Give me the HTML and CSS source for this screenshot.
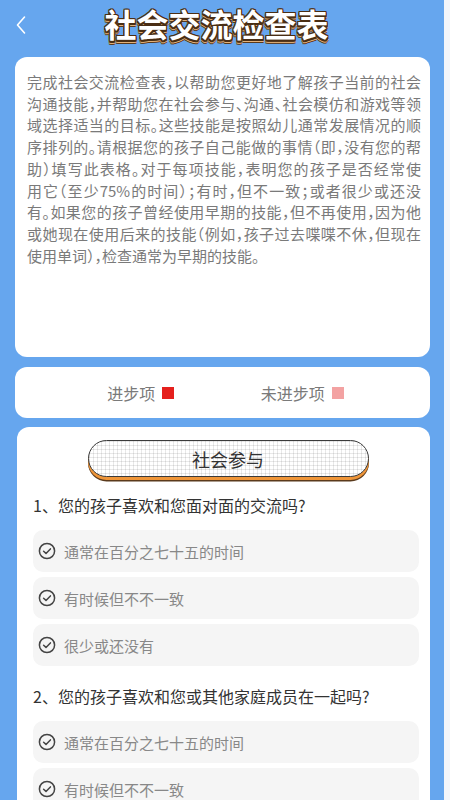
FILE: index.html
```html
<!DOCTYPE html>
<html lang="zh">
<head>
<meta charset="utf-8">
<title>社会交流检查表</title>
<link rel="stylesheet" href="styles.css">
</head>
<body>
<div class="page">
  <header class="topbar">
    <span class="back">
      <svg width="12" height="20" viewBox="0 0 12 20"><path d="M9.5 2 L2.5 10 L9.5 18" fill="none" stroke="#fff" stroke-width="1.6" stroke-linecap="round" stroke-linejoin="round"/></svg>
    </span>
    <h1 class="title">社会交流检查表</h1>
    <span></span>
  </header>

  <section class="card intro">
    <p><span class="ln">完成社会交流检查表，以帮助您更好地了解孩子当前的社会</span><span class="ln">沟通技能，并帮助您在社会参与、沟通、社会模仿和游戏等领</span><span class="ln">域选择适当的目标。这些技能是按照幼儿通常发展情况的顺</span><span class="ln">序排列的。请根据您的孩子自己能做的事情（即，没有您的帮</span><span class="ln">助）填写此表格。对于每项技能，表明您的孩子是否经常使</span><span class="ln">用它（至少75%的时间）；有时，但不一致；或者很少或还没</span><span class="ln">有。如果您的孩子曾经使用早期的技能，但不再使用，因为他</span><span class="ln">或她现在使用后来的技能（例如，孩子过去喋喋不休，但现在</span><span class="ln last">使用单词），检查通常为早期的技能。</span></p>
  </section>

  <section class="card legend">
    <span class="legend-item">进步项<i class="sq sq-red"></i></span>
    <span class="legend-item">未进步项<i class="sq sq-pink"></i></span>
  </section>

  <section class="card form">
    <div class="pill-wrap"><div class="pill">社会参与</div></div>

    <div class="question">1、您的孩子喜欢和您面对面的交流吗?</div>
    <div class="options">
      <div class="option"><svg class="chk" viewBox="0 0 18 18"><circle cx="9" cy="9" r="7.6" fill="none" stroke="#444" stroke-width="1.5"/><path d="M5.6 9.2 L8 11.4 L12.4 6.9" fill="none" stroke="#444" stroke-width="1.5" stroke-linecap="round" stroke-linejoin="round"/></svg><span>通常在百分之七十五的时间</span></div>
      <div class="option"><svg class="chk" viewBox="0 0 18 18"><circle cx="9" cy="9" r="7.6" fill="none" stroke="#444" stroke-width="1.5"/><path d="M5.6 9.2 L8 11.4 L12.4 6.9" fill="none" stroke="#444" stroke-width="1.5" stroke-linecap="round" stroke-linejoin="round"/></svg><span>有时候但不不一致</span></div>
      <div class="option"><svg class="chk" viewBox="0 0 18 18"><circle cx="9" cy="9" r="7.6" fill="none" stroke="#444" stroke-width="1.5"/><path d="M5.6 9.2 L8 11.4 L12.4 6.9" fill="none" stroke="#444" stroke-width="1.5" stroke-linecap="round" stroke-linejoin="round"/></svg><span>很少或还没有</span></div>
    </div>

    <div class="question">2、您的孩子喜欢和您或其他家庭成员在一起吗?</div>
    <div class="options">
      <div class="option"><svg class="chk" viewBox="0 0 18 18"><circle cx="9" cy="9" r="7.6" fill="none" stroke="#444" stroke-width="1.5"/><path d="M5.6 9.2 L8 11.4 L12.4 6.9" fill="none" stroke="#444" stroke-width="1.5" stroke-linecap="round" stroke-linejoin="round"/></svg><span>通常在百分之七十五的时间</span></div>
      <div class="option"><svg class="chk" viewBox="0 0 18 18"><circle cx="9" cy="9" r="7.6" fill="none" stroke="#444" stroke-width="1.5"/><path d="M5.6 9.2 L8 11.4 L12.4 6.9" fill="none" stroke="#444" stroke-width="1.5" stroke-linecap="round" stroke-linejoin="round"/></svg><span>有时候但不不一致</span></div>
      <div class="option"><svg class="chk" viewBox="0 0 18 18"><circle cx="9" cy="9" r="7.6" fill="none" stroke="#444" stroke-width="1.5"/><path d="M5.6 9.2 L8 11.4 L12.4 6.9" fill="none" stroke="#444" stroke-width="1.5" stroke-linecap="round" stroke-linejoin="round"/></svg><span>很少或还没有</span></div>
    </div>
  </section>
</div>
</body>
</html>
```
FILE: styles.css
```css
html, body {
  margin: 0;
  padding: 0;
  background: #f4f6fa;
}
body {
  font-family: "Noto Sans CJK SC", "Noto Sans", sans-serif;
  overflow: hidden;
}
.page {
  width: 444px;
  height: 800px;
  background: #66a6ee;
  box-sizing: border-box;
  padding: 0 14px 0 15px;
  overflow: hidden;
}
.topbar {
  height: 50px;
  display: grid;
  grid-template-columns: 40px 1fr 40px;
  align-items: start;
}
.back {
  display: flex;
  align-items: center;
  margin-top: 15px;
}
.title {
  margin: 0;
  text-align: center;
  font-size: 32px;
  line-height: 46px;
  font-weight: 700;
  color: #fff;
  margin-left: -12px;
  text-shadow:
    -1px -1px 0 #4a2e14, 1px -1px 0 #4a2e14, -1px 1px 0 #4a2e14, 1px 1px 0 #4a2e14,
    -1px 0 0 #4a2e14, 1px 0 0 #4a2e14, 0 -1px 0 #4a2e14,
    0 2px 0 #4a2e14, -1px 2px 0 #4a2e14, 1px 2px 0 #4a2e14,
    0 3px 0 #e3b27a, -1px 3px 0 #e3b27a, 1px 3px 0 #e3b27a,
    0 4px 0 #5a3a1c, -1px 4px 0 #5a3a1c, 1px 4px 0 #5a3a1c;
}
.card {
  background: #fff;
  border-radius: 12px;
}
.intro {
  margin-top: 7px;
  height: 300px;
  box-sizing: border-box;
  padding: 14px 0 0 12px;
}
.intro p {
  margin: 0;
  width: 394px;
  font-size: 15px;
  line-height: 21.7px;
  color: #7a7a7a;
  font-feature-settings: "halt";
}
.ln {
  display: block;
  white-space: nowrap;
  text-align: justify;
  text-align-last: justify;
}
.ln.last {
  text-align: left;
  text-align-last: left;
}
.legend {
  margin-top: 10px;
  height: 51px;
  display: flex;
  justify-content: space-evenly;
  align-items: center;
  padding-left: 6px;
}
.legend-item {
  display: flex;
  align-items: center;
  gap: 7px;
  font-size: 16px;
  color: #7a7a7a;
}
.sq {
  display: inline-block;
  width: 12px;
  height: 12px;
}
.sq-red { background: #e5201d; }
.sq-pink { background: #f3a2a2; }
.form {
  margin-top: 9px;
  margin-left: 2px;
  height: 400px;
  padding: 13px 11px 0 16px;
  border-radius: 12px 12px 0 0;
}
.pill-wrap {
  display: flex;
  justify-content: center;
  padding-left: 4px;
}
.pill {
  width: 279px;
  height: 35px;
  border: 1.5px solid #3a3a3a;
  border-radius: 19px;
  display: flex;
  align-items: center;
  justify-content: center;
  font-size: 18px;
  color: #333;
  font-weight: 400;
  background-color: #fff;
  background-image:
    linear-gradient(to right, rgba(0,0,0,0.09) 1px, transparent 1px),
    linear-gradient(to bottom, rgba(0,0,0,0.09) 1px, transparent 1px);
  background-size: 4px 4px;
  box-shadow: 0 3px 0 #ef9538, 0 4.5px 0 #5a3a1c;
}
.question {
  font-size: 16px;
  line-height: 22px;
  color: #333;
  margin: 19px 0 14px 0;
}
.pill-wrap + .question {
  margin-top: 17px;
}
.options {
  display: flex;
  flex-direction: column;
  gap: 5px;
}
.option {
  height: 42px;
  background: #f5f5f5;
  border-radius: 10px;
  display: flex;
  align-items: center;
  padding-left: 5px;
  gap: 8px;
  font-size: 15px;
  color: #888;
}
.chk {
  width: 18px;
  height: 18px;
  flex: none;
}
```
